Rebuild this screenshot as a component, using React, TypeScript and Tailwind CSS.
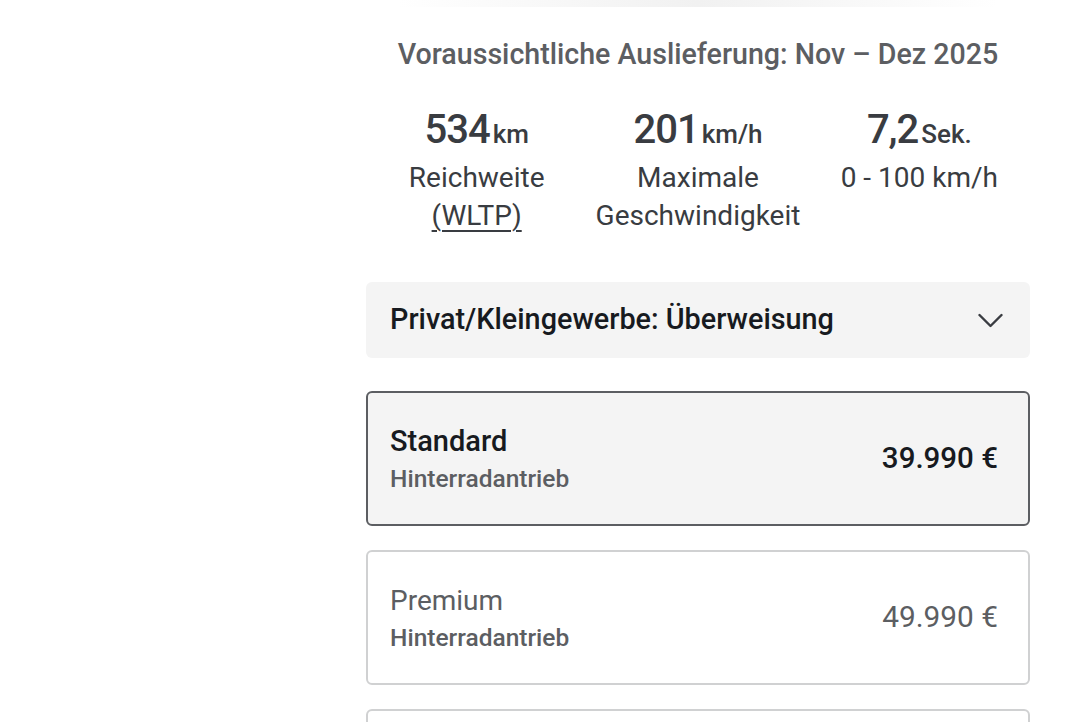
type Spec = {
  value: string;
  unit: string;
  label: string[];
  underline?: boolean;
};

const specs: Spec[] = [
  { value: "534", unit: "km", label: ["Reichweite", "(WLTP)"], underline: true },
  { value: "201", unit: "km/h", label: ["Maximale", "Geschwindigkeit"] },
  { value: "7,2", unit: "Sek.", label: ["0 - 100 km/h"] },
];

type Trim = {
  name: string;
  drive: string;
  price: string;
  selected?: boolean;
};

const trims: Trim[] = [
  { name: "Standard", drive: "Hinterradantrieb", price: "39.990 €", selected: true },
  { name: "Premium", drive: "Hinterradantrieb", price: "49.990 €" },
  { name: "Premium", drive: "Allradantrieb", price: "54.990 €" },
];

function TrimCard({ trim }: { trim: Trim }) {
  return (
    <div
      className={
        trim.selected
          ? "flex h-[135px] shrink-0 items-center justify-between rounded-md border-2 border-[#5c5e62] bg-[#f4f4f4] pl-[22px] pr-[30px]"
          : "flex h-[135px] shrink-0 items-center justify-between rounded-md border-2 border-[#d0d1d2] bg-white pl-[22px] pr-[30px]"
      }
    >
      <div className="flex flex-col pt-[2px]">
        <span
          className={
            trim.selected
              ? "text-[29px] leading-[37px] font-medium text-[#171a20]"
              : "text-[28px] leading-[37px] font-normal text-[#5c5e62]"
          }
        >
          {trim.name}
        </span>
        <span className="text-[24.5px] leading-[37px] font-medium text-[#5c5e62]">
          {trim.drive}
        </span>
      </div>
      <span
        className={
          trim.selected
            ? "text-[29.5px] font-medium text-[#171a20]"
            : "text-[29.8px] font-normal text-[#5c5e62]"
        }
      >
        {trim.price}
      </span>
    </div>
  );
}

export default function App() {
  return (
    <main
      className="h-screen overflow-hidden bg-white"
      style={{ fontFamily: "Roboto, 'Noto Sans', Arial, sans-serif" }}
    >
      <div className="ml-[366px] w-[664px]">
        <div className="mx-auto h-[7px] w-[600px] bg-gradient-to-r from-transparent via-[#f1f1f1] to-transparent" />

        <p className="mt-[30px] text-center text-[28.6px] leading-[34px] font-medium text-[#5c5e62]">
          Voraussichtliche Auslieferung: Nov – Dez 2025
        </p>

        <div className="mt-[35px] grid grid-cols-3">
          {specs.map((s) => (
            <div key={s.value} className="flex flex-col items-center">
              <div className="flex items-baseline">
                <span className="text-[40px] leading-[48px] font-medium tracking-tight text-[#393c41]">
                  {s.value}
                </span>
                <span className="ml-[3px] text-[26px] font-medium text-[#393c41]">
                  {s.unit}
                </span>
              </div>
              <div className="mt-[5px] flex flex-col items-center text-[28px] leading-[38px] text-[#393c41]">
                {s.label.map((l, i) => (
                  <span
                    key={l}
                    className={
                      s.underline && i === s.label.length - 1
                        ? "underline decoration-[2px] underline-offset-[5px]"
                        : ""
                    }
                  >
                    {l}
                  </span>
                ))}
              </div>
            </div>
          ))}
        </div>

        <button className="mt-[47px] flex h-[76px] w-full items-center justify-between rounded-md bg-[#f4f4f4] pl-[24px] pr-[27px]">
          <span className="text-[28.8px] font-medium text-[#171a20]">
            Privat/Kleingewerbe: Überweisung
          </span>
          <svg width="25" height="15" viewBox="0 0 25 15" fill="none" className="text-[#393c41]">
            <polyline
              points="1.5,2 12.5,13 23.5,2"
              stroke="currentColor"
              strokeWidth="2.4"
              strokeLinecap="round"
              strokeLinejoin="round"
            />
          </svg>
        </button>

        <div className="mt-[33px] flex flex-col gap-[24px]">
          {trims.map((t, i) => (
            <TrimCard key={i} trim={t} />
          ))}
        </div>
      </div>
    </main>
  );
}
